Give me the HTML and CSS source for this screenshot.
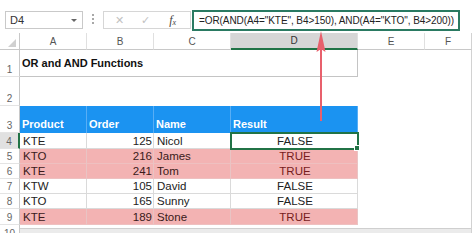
FILE: index.html
```html
<!DOCTYPE html>
<html>
<head>
    <title>OR and AND Functions</title>
    <meta charset="UTF-8"/>
    <link rel="stylesheet" href="styles.css">
</head>
<body>
<div class="formula_bar">
    <div class="name_box"><span>D4</span><span class="name_box_arrow"></span></div>
    <div class="bar_grip"><i></i><i></i><i></i></div>
    <div class="bar_buttons">
        <span class="bar_cancel">&#x2715;</span>
        <span class="bar_enter">&#x2713;</span>
        <span class="bar_fx"><i>f</i><sub>x</sub></span>
    </div>
    <div class="formula_input">=OR(AND(A4="KTE", B4&gt;150), AND(A4="KTO", B4&gt;200))</div>
</div>

<div class="sheet">
    <!-- column headers -->
    <div class="corner"><span class="corner_mark"></span></div>
    <div class="col_head">A</div>
    <div class="col_head">B</div>
    <div class="col_head">C</div>
    <div class="col_head active">D</div>
    <div class="col_head">E</div>
    <div class="col_head last">F</div>
    <div class="edge"></div>

    <!-- row 1 -->
    <div class="row_head">1</div>
    <div class="cell title">OR and AND Functions</div>
    <div class="empty"></div>
    <div class="empty last"></div>
    <div class="edge"></div>

    <!-- row 2 -->
    <div class="row_head">2</div>
    <div class="blank"></div>
    <div class="empty"></div>
    <div class="empty last"></div>
    <div class="edge"></div>

    <!-- row 3 -->
    <div class="row_head">3</div>
    <div class="cell head">Product</div>
    <div class="cell head">Order</div>
    <div class="cell head">Name</div>
    <div class="cell head">Result</div>
    <div class="empty"></div>
    <div class="empty last"></div>
    <div class="edge"></div>

    <!-- data -->
    <div class="row_head active">4</div>
    <div class="cell">KTE</div>
    <div class="cell num">125</div>
    <div class="cell">Nicol</div>
    <div class="cell result selected">FALSE</div>
    <div class="empty"></div>
    <div class="empty last"></div>
    <div class="edge"></div>

    <div class="row_head">5</div>
    <div class="cell hit">KTO</div>
    <div class="cell num hit">216</div>
    <div class="cell hit">James</div>
    <div class="cell result hit">TRUE</div>
    <div class="empty"></div>
    <div class="empty last"></div>
    <div class="edge"></div>

    <div class="row_head">6</div>
    <div class="cell hit">KTE</div>
    <div class="cell num hit">241</div>
    <div class="cell hit">Tom</div>
    <div class="cell result hit">TRUE</div>
    <div class="empty"></div>
    <div class="empty last"></div>
    <div class="edge"></div>

    <div class="row_head">7</div>
    <div class="cell">KTW</div>
    <div class="cell num">105</div>
    <div class="cell">David</div>
    <div class="cell result">FALSE</div>
    <div class="empty"></div>
    <div class="empty last"></div>
    <div class="edge"></div>

    <div class="row_head">8</div>
    <div class="cell">KTO</div>
    <div class="cell num">165</div>
    <div class="cell">Sunny</div>
    <div class="cell result">FALSE</div>
    <div class="empty"></div>
    <div class="empty last"></div>
    <div class="edge"></div>

    <div class="row_head">9</div>
    <div class="cell hit">KTE</div>
    <div class="cell num hit">189</div>
    <div class="cell hit">Stone</div>
    <div class="cell result hit">TRUE</div>
    <div class="empty"></div>
    <div class="empty last"></div>
    <div class="edge"></div>

    <!-- row 10, cut off by the window -->
    <div class="row_head cut">10</div>
    <div class="tail"></div>
    <div class="edge"></div>
</div>

<svg class="arrow" width="12" height="92" viewBox="0 0 12 92">
    <line x1="6" y1="18" x2="6" y2="91" stroke="#e8606c" stroke-width="2"/>
    <path d="M6 1 L10.5 22 L6 19 L1.5 22 Z" fill="#e8606c"/>
</svg>
</body>
</html>
```

FILE: styles.css
```css
html, body {
    margin: 0;
}

body {
    position: relative;
    width: 474px;
    height: 233px;
    overflow: hidden;
    background: #fff;
    color: #222;
    font-family: "Liberation Sans", Arial, sans-serif;
}

/* formula bar */

.formula_bar {
    display: flex;
    align-items: flex-start;
    height: 33px;
    box-sizing: border-box;
    padding: 11px 0 0 5px;
}

.name_box {
    display: flex;
    align-items: center;
    justify-content: space-between;
    width: 78px;
    height: 18px;
    box-sizing: border-box;
    border: 1px solid #c9c9c9;
    padding: 0 5px 0 4px;
    font-size: 11px;
    color: #333;
}

.name_box_arrow {
    width: 0;
    height: 0;
    border-left: 3px solid transparent;
    border-right: 3px solid transparent;
    border-top: 3px solid #666;
}

.bar_grip {
    display: flex;
    flex-direction: column;
    gap: 2px;
    margin: 3px 9px 0 9px;
}

.bar_grip i {
    width: 2px;
    height: 2px;
    background: #a8a8a8;
}

.bar_buttons {
    display: grid;
    grid-template-columns: repeat(3, 1fr);
    align-items: center;
    justify-items: center;
    width: 88px;
    height: 18px;
    box-sizing: border-box;
    border: 1px solid #d6d6d6;
    padding: 0 4px 0 2px;
    color: #c2c2c2;
    font-size: 11px;
}

.bar_fx {
    color: #444;
    font-family: "Liberation Serif", serif;
    font-size: 12px;
}

.bar_fx sub {
    font-size: 8px;
    font-style: italic;
    vertical-align: -1px;
}

.formula_input {
    width: 268px;
    height: 21px;
    box-sizing: border-box;
    margin: -1px 0 0 1px;
    border: 2px solid #2a7a62;
    padding: 0 0 0 5px;
    font-size: 10px;
    letter-spacing: -0.08px;
    line-height: 17px;
    white-space: nowrap;
    color: #222;
}

/* sheet */

.sheet {
    display: grid;
    grid-template-columns: 20px 67px 67px 77px 127px 67px 47px 2px;
    grid-template-rows: 17px 27px 29px 27px 16px 15px 15px 15px 15px 16px 8px;
    font-size: 11.5px;
}

.sheet > div {
    display: flex;
    box-sizing: border-box;
    min-width: 0;
    overflow: hidden;
    white-space: nowrap;
}

.corner {
    align-items: flex-end;
    justify-content: flex-end;
    padding: 0 3px 2px 0;
    border-right: 1px solid #c8c8c8;
    border-bottom: 1px solid #c8c8c8;
}

.corner_mark {
    width: 0;
    height: 0;
    border-left: 8px solid transparent;
    border-bottom: 8px solid #d0d0d0;
}

.col_head {
    align-items: center;
    justify-content: center;
    font-size: 10px;
    color: #555;
    border-right: 1px solid #e0e0e0;
    border-bottom: 1px solid #c8c8c8;
}

.col_head.active {
    background: #d6d6d6;
    border-bottom: 2px solid #217346;
    color: #333;
}

.col_head.last, .empty.last, .tail {
    border-right: 1px solid #d2d2d2;
}

.row_head {
    align-items: flex-end;
    justify-content: center;
    padding-bottom: 1px;
    font-size: 10px;
    color: #666;
    border-right: 1px solid #c8c8c8;
    border-bottom: 1px solid #e4e4e4;
}

.row_head.active {
    background: #e1e1e1;
    border-right: 2px solid #217346;
}

.row_head.cut {
    align-items: flex-start;
    padding-top: 3px;
    border-bottom: none;
}

.cell {
    align-items: flex-end;
    padding: 0 1px 1px 3px;
    border-right: 1px solid #dadada;
    border-bottom: 1px solid #dadada;
}

.title {
    grid-column: span 4;
    align-items: center;
    padding: 0 0 0 2px;
    font-size: 11px;
    font-weight: bold;
    color: #111;
    border-right-color: #c4c4c4;
    border-bottom-color: #c4c4c4;
}

.blank {
    grid-column: span 4;
}

.head {
    background: #1b93f1;
    color: #fff;
    font-size: 11px;
    font-weight: bold;
    padding: 0 1px 3px 2px;
    border-right-color: #58aef5;
    border-bottom: none;
}

.num {
    justify-content: flex-end;
}

.result {
    justify-content: center;
}

.hit {
    background: #f3b3b3;
    color: #3a1a1a;
    border-right-color: #e9c4c4;
    border-bottom-color: #eec0c0;
}

.result.hit {
    color: #761d1d;
}

.selected {
    position: relative;
    z-index: 1;
    overflow: visible !important;
    outline: 2px solid #217346;
    outline-offset: -1px;
}

.selected::after {
    content: "";
    position: absolute;
    right: -3px;
    bottom: -3px;
    width: 4px;
    height: 4px;
    background: #217346;
    border: 1px solid #fff;
}

.tail {
    grid-column: span 6;
    background: linear-gradient(#fff 0 3px, #cfcfcf 3px 4px, #ebebeb 4px);
}

.arrow {
    position: absolute;
    left: 315px;
    top: 30px;
}
```
